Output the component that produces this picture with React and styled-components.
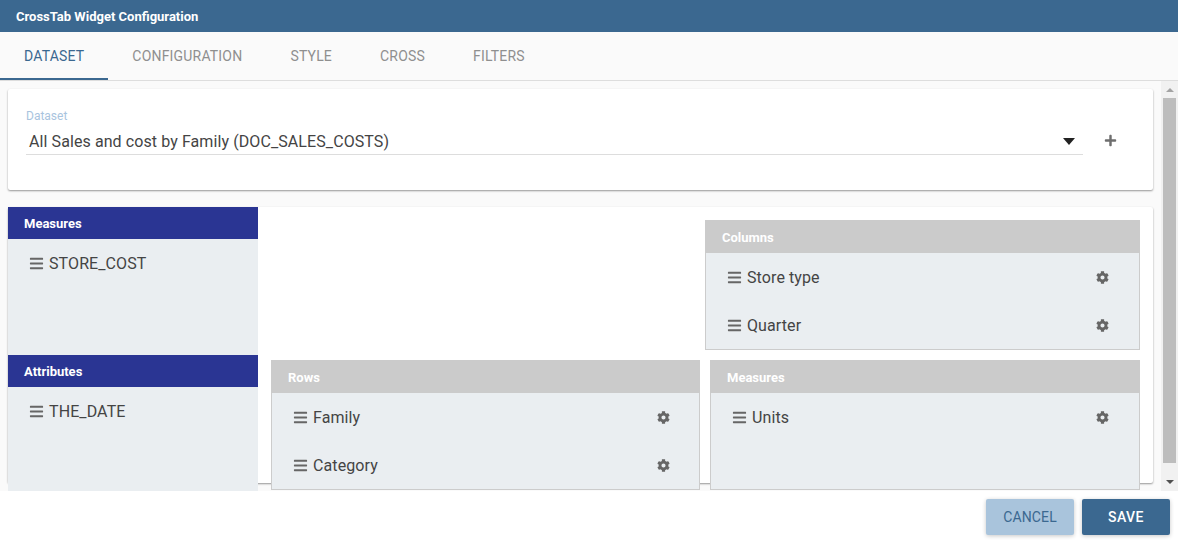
import React from 'react'
import styled, { createGlobalStyle } from 'styled-components'
import { FaBars, FaCog, FaPlus } from 'react-icons/fa'

const Global = createGlobalStyle`
    html, body { margin: 0; padding: 0; background: #fff; }
    * { box-sizing: border-box; }
    body { font-family: Roboto, "Liberation Sans", sans-serif; }
`
const primary = '#3b6890'

const Page = styled.div`
    width: 1178px;
    height: 543px;
    display: flex;
    flex-direction: column;
    overflow: hidden;
    background: #fff;
`
const TitleBar = styled.div`
    height: 32px;
    flex: none;
    background: ${primary};
    color: #fff;
    font-size: 13px;
    font-weight: 700;
    line-height: 34px;
    padding-left: 16px;
`
const Tabs = styled.div`
    height: 49px;
    flex: none;
    display: flex;
    background: #fafafa;
    border-bottom: 1px solid #ddd;
`
const Tab = styled.div`
    height: 48px;
    padding: 0 24px;
    line-height: 48px;
    font-size: 14px;
    letter-spacing: .19px;
    color: ${p => (p.$active ? primary : '#8f8f8f')};
    border-bottom: 2px solid ${p => (p.$active ? primary : 'transparent')};
`
const Body = styled.div`
    height: 410px;
    flex: none;
    display: flex;
    overflow: hidden;
    background: #fafafa;
`
const Content = styled.div`
    flex: 1;
    min-width: 0;
    padding: 8px 8px 0 8px;
`
const Card = styled.div`
    background: #fff;
    border-radius: 2px;
    box-shadow: 0 1px 2px rgba(0, 0, 0, .4);
`
const DatasetCard = styled(Card)`
    height: 101px;
    margin-bottom: 17px;
    padding: 20px 18px 0;
    display: flex;
    align-items: flex-start;
`
const Field = styled.div`
    width: 1057px;
`
const Label = styled.div`
    font-size: 12px;
    line-height: 14px;
    color: #a9c4de;
`
const Select = styled.div`
    height: 26px;
    margin-top: 6px;
    padding: 0 8px 0 3px;
    display: flex;
    align-items: center;
    justify-content: space-between;
    border-bottom: 1px solid #ddd;
    font-size: 16px;
    letter-spacing: .09px;
    color: #444;
`
const Arrow = styled.span`
    width: 0;
    height: 0;
    border-left: 6px solid transparent;
    border-right: 6px solid transparent;
    border-top: 7px solid #222;
`
const AddButton = styled.div`
    margin: 25px 0 0 21px;
    color: #6e6e6e;
    font-size: 13px;
    line-height: 13px;
`
const LayoutCard = styled(Card)`
    height: 276px;
    display: flex;
`
const Sidebar = styled.div`
    width: 250px;
    flex: none;
`
const SideSection = styled.div`
    height: ${p => p.$height}px;
    background: #eaeef1;
`
const SideHeader = styled.div`
    height: 32px;
    background: #2a3593;
    color: #fff;
    font-size: 13px;
    font-weight: 700;
    line-height: 33px;
    padding-left: 16px;
`
const Main = styled.div`
    flex: 1;
    padding: 13px 13px 0 13px;
    display: flex;
    flex-direction: column;
    gap: 10px;
`
const MainRow = styled.div`
    display: flex;
    justify-content: ${p => (p.$end ? 'flex-end' : 'space-between')};
`
const Box = styled.div`
    width: ${p => p.$width}px;
    height: 130px;
    background: #eaeef1;
    border: 1px solid #ccc;
    border-top: 0;
`
const BoxHeader = styled.div`
    height: 33px;
    margin: 0 -1px;
    background: #cbcbcb;
    color: #fff;
    font-size: 13px;
    font-weight: 700;
    line-height: 35px;
    padding-left: 17px;
`
const Item = styled.div`
    height: 48px;
    padding: 0 ${p => p.$right}px 0 21px;
    display: flex;
    align-items: center;
    font-size: 16px;
    letter-spacing: .1px;
    color: #444;
    svg { flex: none; color: #666; }
`
const ItemName = styled.span`
    flex: 1;
    margin-left: 5px;
`
const Scrollbar = styled.div`
    width: 17px;
    flex: none;
    background: #f1f1f1;
    display: flex;
    flex-direction: column;
    align-items: center;
`
const ScrollArrow = styled.span`
    width: 0;
    height: 0;
    flex: none;
    margin: ${p => (p.$down ? 'auto 0 7px' : '7px 0 6px')};
    border-left: 4px solid transparent;
    border-right: 4px solid transparent;
    ${p => (p.$down ? 'border-top: 4px solid #505050;' : 'border-bottom: 4px solid #a3a3a3;')}
`
const ScrollThumb = styled.div`
    width: 13px;
    height: 365px;
    flex: none;
    background: #bdbdbd;
`
const Footer = styled.div`
    flex: 1;
    display: flex;
    justify-content: flex-end;
    gap: 8px;
    padding: 8px 8px 0 0;
    background: #fff;
`
const Button = styled.div`
    width: 88px;
    height: 36px;
    border-radius: 2px;
    text-align: center;
    line-height: 37px;
    font-size: 14px;
    letter-spacing: ${p => (p.$primary ? '.45px' : '.15px')};
    font-weight: ${p => (p.$primary ? 500 : 400)};
    background: ${p => (p.$primary ? primary : '#a9c4dc')};
    color: ${p => (p.$primary ? '#fff' : primary)};
    box-shadow: 0 1px 4px rgba(0, 0, 0, .22);
`

const FieldItem = ({ name, side, right = 30 }) => (
    <Item $right={right}>
        <FaBars size={15} />
        <ItemName>{name}</ItemName>
        {!side && <FaCog size={13} />}
    </Item>
)

const DropBox = ({ title, width, items, right }) => (
    <Box $width={width}>
        <BoxHeader>{title}</BoxHeader>
        {items.map(i => <FieldItem key={i} name={i} right={right} />)}
    </Box>
)

export default function App() {
    return (
        <Page>
            <Global />
            <TitleBar>CrossTab Widget Configuration</TitleBar>
            <Tabs>
                <Tab $active>DATASET</Tab>
                <Tab>CONFIGURATION</Tab>
                <Tab>STYLE</Tab>
                <Tab>CROSS</Tab>
                <Tab>FILTERS</Tab>
            </Tabs>
            <Body>
                <Content>
                    <DatasetCard>
                        <Field>
                            <Label>Dataset</Label>
                            <Select>
                                All Sales and cost by Family (DOC_SALES_COSTS)
                                <Arrow />
                            </Select>
                        </Field>
                        <AddButton><FaPlus /></AddButton>
                    </DatasetCard>
                    <LayoutCard>
                        <Sidebar>
                            <SideSection $height={148}>
                                <SideHeader>Measures</SideHeader>
                                <FieldItem side name="STORE_COST" />
                            </SideSection>
                            <SideSection $height={136}>
                                <SideHeader>Attributes</SideHeader>
                                <FieldItem side name="THE_DATE" />
                            </SideSection>
                        </Sidebar>
                        <Main>
                            <MainRow $end>
                                <DropBox title="Columns" width={435} items={['Store type', 'Quarter']} />
                            </MainRow>
                            <MainRow>
                                <DropBox title="Rows" width={429} right={29} items={['Family', 'Category']} />
                                <DropBox title="Measures" width={430} items={['Units']} />
                            </MainRow>
                        </Main>
                    </LayoutCard>
                </Content>
                <Scrollbar>
                    <ScrollArrow />
                    <ScrollThumb />
                    <ScrollArrow $down />
                </Scrollbar>
            </Body>
            <Footer>
                <Button>CANCEL</Button>
                <Button $primary>SAVE</Button>
            </Footer>
        </Page>
    )
}
